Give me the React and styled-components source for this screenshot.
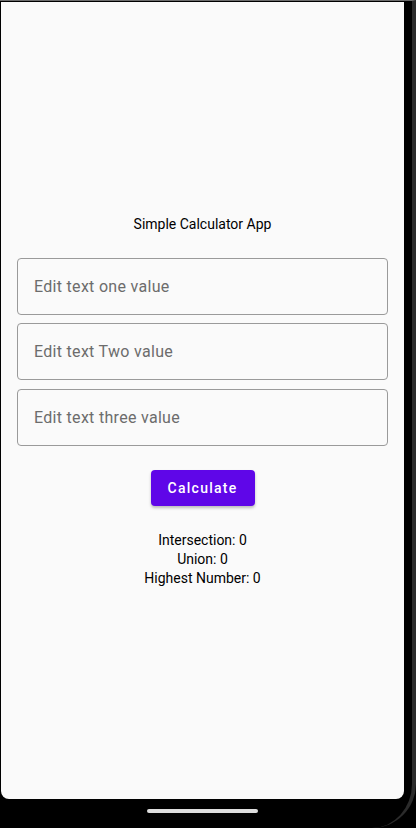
import React from 'react';
import styled, { createGlobalStyle } from 'styled-components';

const GlobalStyle = createGlobalStyle`
  html, body {
    margin: 0;
    padding: 0;
    background: #000;
  }
  * {
    box-sizing: border-box;
  }
`;

const Frame = styled.div`
  width: 416px;
  height: 828px;
  background: #000;
  border-top: 1px solid #6c6c6c;
  border-right: 4px solid #2b2b2b;
  border-bottom-right-radius: 44px;
  display: flex;
  flex-direction: column;
  overflow: hidden;
`;

const Screen = styled.div`
  margin-left: 1px;
  margin-top: 1px;
  width: 403px;
  height: 797px;
  background: #fafafa;
  border-bottom-left-radius: 8px;
  border-bottom-right-radius: 8px;
  display: flex;
  flex-direction: column;
  align-items: center;
  justify-content: center;
  padding: 0 16px;
  font-family: Roboto, "Noto Sans", sans-serif;
`;

const Title = styled.div`
  font-size: 14px;
  line-height: 20px;
  color: #000;
  margin-bottom: 24px;
`;

const Fields = styled.div`
  width: 100%;
  display: flex;
  flex-direction: column;
  gap: 8.5px;
`;

const Field = styled.input`
  width: 100%;
  height: 57px;
  border: 1px solid #9a9a9a;
  border-radius: 4px;
  background: transparent;
  padding: 0 16px;
  font-family: Roboto, "Noto Sans", sans-serif;
  font-size: 16px;
  letter-spacing: 0.3px;
  color: #000;
  outline: none;

  &::placeholder {
    color: #6c6c6c;
  }
`;

const CalcButton = styled.button`
  margin-top: 24px;
  height: 36px;
  width: 104px;
  border: none;
  border-radius: 4px;
  background: #5f06e8;
  color: #fff;
  font-family: Roboto, "Noto Sans", sans-serif;
  font-size: 14px;
  font-weight: 500;
  letter-spacing: 1.25px;
  box-shadow: 0 2px 3px rgba(0, 0, 0, 0.25);
  cursor: pointer;
`;

const Results = styled.div`
  margin-top: 25px;
  text-align: center;
  font-size: 14px;
  line-height: 19px;
  color: #000;
`;

const NavArea = styled.div`
  flex: 1;
  display: flex;
  justify-content: center;
  padding-top: 10px;
  padding-right: 8px;
`;

const HomeBar = styled.div`
  width: 111px;
  height: 4px;
  border-radius: 2px;
  background: #dedede;
`;

export default function App() {
  return (
    <>
      <GlobalStyle />
      <Frame>
        <Screen>
          <Title>Simple Calculator App</Title>
          <Fields>
            <Field placeholder="Edit text one value" />
            <Field placeholder="Edit text Two value" />
            <Field placeholder="Edit text three value" />
          </Fields>
          <CalcButton>Calculate</CalcButton>
          <Results>
            <div>Intersection: 0</div>
            <div>Union: 0</div>
            <div>Highest Number: 0</div>
          </Results>
        </Screen>
        <NavArea>
          <HomeBar />
        </NavArea>
      </Frame>
    </>
  );
}
